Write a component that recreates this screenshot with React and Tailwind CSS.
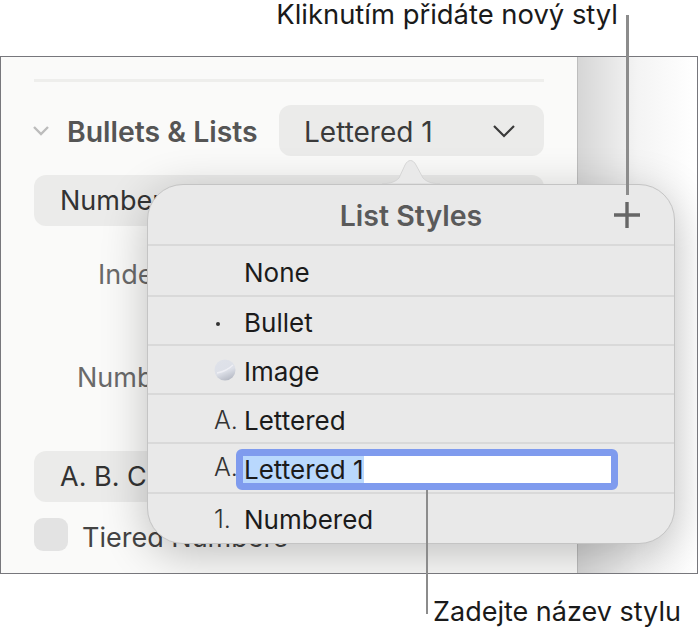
function ImageBullet() {
  return (
    <svg width="22" height="22" viewBox="0 0 22 22" className="shrink-0">
      <defs>
        <linearGradient id="bulletFill" x1="0.3" y1="0" x2="0.7" y2="1">
          <stop offset="0" stopColor="#dfe2e9" />
          <stop offset="0.55" stopColor="#dde0e8" />
          <stop offset="1" stopColor="#b3b7c2" />
        </linearGradient>
      </defs>
      <circle cx="11" cy="11" r="10.5" fill="url(#bulletFill)" />
      <path d="M3 14 C8 13 14 11 19 6" stroke="#f2f3f7" strokeWidth="1.4" fill="none" opacity="0.8" />
    </svg>
  );
}

function Row({ marker, label, last, tall }) {
  return (
    <div className={`flex items-center ${last ? "pt-[2px]" : "pt-[4px]"} ${tall ? "h-[51px]" : "h-[49px]"} ${last ? "" : "border-b-[2px] border-[#d9d9d9]"}`}>
      <div className="flex w-[96px] shrink-0 pl-[66px] text-[25px] font-light text-[#333333]">{marker}</div>
      <div className="text-[26px] leading-[32px] text-[#1b1b1b]">{label}</div>
    </div>
  );
}

export default function App() {
  return (
    <div className="relative h-[638px] w-[700px] overflow-hidden bg-white font-['Inter',sans-serif]">
      <div className="flex h-[56px] justify-end pr-[82px] text-[27.4px] leading-[29px] text-[#1a1a1a]">
        Kliknutím přidáte nový styl
      </div>

      <div className="relative flex h-[518px] w-[698px] overflow-hidden border border-[#77777c]">
        <div className="w-[577px] shrink-0 border-r border-[#bdbdbd] bg-[#fafaf9] pl-[33px] pr-[33px]">
          <div className="mt-[22px] h-[3px] bg-[#eeeeec]" />
          <div className="mt-[23px] flex h-[51px] items-center">
            <svg width="18" height="12" viewBox="0 0 18 12" className="-ml-[2px] shrink-0">
              <path d="M2 2 L9 9 L16 2" fill="none" stroke="#bcbcbc" strokeWidth="2.4" />
            </svg>
            <span className="ml-[17px] w-[212px] shrink-0 whitespace-nowrap pt-[3px] text-[28.4px] font-semibold text-[#555555]">Bullets &amp; Lists</span>
            <div className="flex h-[51px] flex-1 items-center justify-between rounded-[12px] bg-[#ebebea] pl-[25px] pr-[28px] text-[28px] text-[#3a3a3a]">
              <span className="pt-[3px]">Lettered 1</span>
              <svg width="24" height="14" viewBox="0 0 24 14">
                <path d="M2 2 L12 12 L22 2" fill="none" stroke="#3a3a3a" strokeWidth="2.2" />
              </svg>
            </div>
          </div>
          <div className="mt-[19px] flex h-[51px] items-center rounded-[12px] bg-[#ebebea] pl-[26px] pt-[2px] text-[27px] text-[#333333]">Number</div>
          <div className="mt-[31px] pl-[64px] text-[27px] leading-[36px] text-[#6a6a6a]">Indent</div>
          <div className="mt-[67px] pl-[43px] text-[27px] leading-[36px] text-[#6a6a6a]">Number</div>
          <div className="mt-[55px] flex h-[51px] items-center rounded-[12px] bg-[#ebebea] pl-[26px] pt-[2px] text-[27px] text-[#333333]">A. B. C.</div>
          <div className="mt-[16px] flex items-start">
            <div className="h-[33px] w-[34px] rounded-[9px] bg-[#e3e3e3]" />
            <span className="ml-[14px] pt-[3px] text-[27px] leading-[34px] text-[#444444]">Tiered Numbers</span>
          </div>
        </div>
        <div className="flex-1 bg-gradient-to-r from-[#d6d6d6] via-[#f4f4f4] via-50% to-white" />

        <svg width="62" height="26" viewBox="0 0 62 26" className="absolute left-[379px] top-[101px] z-20">
          <path d="M2 26 C12 25 15 24 19 20 L25 7 C28 1 33 1 36 7 L43 20 C47 24 50 25 60 26 Z" fill="#e9e9e9" stroke="#cfcfcf" strokeWidth="0.8" />
        </svg>

        <div className="absolute left-[146px] top-[127px] z-10 h-[360px] w-[528px] rounded-[36px] border border-[#c4c4c4] bg-[#e9e9e9] shadow-[0_10px_46px_rgba(0,0,0,0.24)]">
          <div className="relative flex h-[61px] items-center justify-center border-b-[2px] border-[#d9d9d9] pt-[3px] text-[28.5px] font-semibold text-[#5a5a5a]">
            List Styles
            <svg width="28" height="28" viewBox="0 0 28 28" className="absolute right-[33px] top-[16px]">
              <path d="M14 1 V27 M1 14 H27" stroke="#666666" strokeWidth="3.4" />
            </svg>
          </div>
          <Row marker="" label="None" tall />
          <Row marker={<span className="ml-[2px] mt-[2px] h-[4px] w-[4px] rounded-full bg-[#333333]" />} label="Bullet" />
          <Row marker={<span className="-mt-[3px]"><ImageBullet /></span>} label="Image" />
          <Row marker="A." label="Lettered" />
          <div className="flex h-[50px] items-center border-b-[2px] border-[#d9d9d9]">
            <div className="w-[88px] shrink-0 pl-[66px] text-[25px] font-light text-[#333333]">A.</div>
            <div className="mt-[2px] flex h-[41px] w-[382px] items-center rounded-[6px] border-[7px] border-[#7f9bee] bg-white text-[26px] text-[#1b1b1b]">
              <span className="bg-[#b9d8fd] pl-[1px] pr-[1px] leading-[27px]">Lettered 1</span>
            </div>
          </div>
          <Row marker="1." label="Numbered" last />
        </div>
      </div>

      <div className="absolute left-[626px] top-[15px] z-30 h-[180px] w-[3px] bg-[#8c8c8c]" />
      <div className="absolute left-[426px] top-[490px] z-30 h-[124px] w-[2px] bg-[#8c8c8c]" />
      <div className="absolute left-[433px] top-[596px] z-30 text-[27px] leading-[32px] text-[#1a1a1a]">Zadejte název stylu</div>
    </div>
  );
}
